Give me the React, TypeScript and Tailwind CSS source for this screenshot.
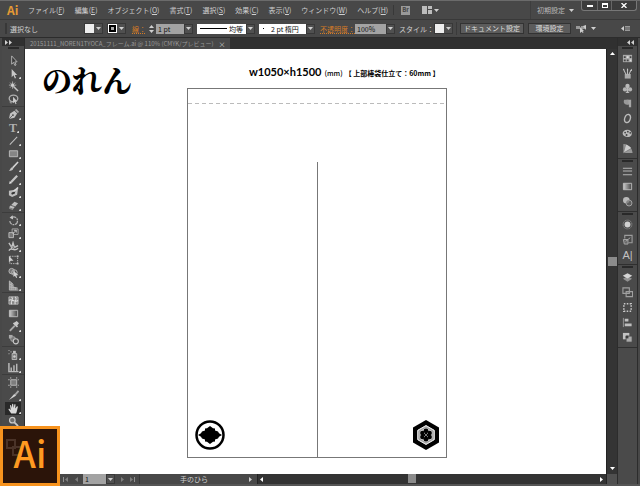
import React from "react";

type IconName = string;

const icons: Record<IconName, React.ReactNode> = {
  select: <path d="M4 1v9l2-2 1.5 3.5 1.3-.6L7.4 7.500H10z" fill="#3a3a3a" stroke="#b8b8b8" strokeWidth="1" />,
  direct: <path d="M4 1v9l2-2 1.500 3.500 1.300-.6L7.400 7.500H10z" fill="#c8c8c8" />,
  wand: (
    <>
      <path d="M6 6l5 5" stroke="#c4c4c4" strokeWidth="1.600" />
      <path d="M5 .5v8M1 4.500h8M2.300 1.800l5.400 5.400M7.700 1.800L2.300 7.200" stroke="#b8b8b8" strokeWidth=".9" />
      <circle cx="5" cy="4.500" r="1.700" fill="#ccc" />
    </>
  ),
  lasso: (
    <>
      <ellipse cx="6" cy="4.800" rx="4.700" ry="3.500" fill="none" stroke="#b0b0b0" strokeWidth="1.400" />
      <path d="M3 7.500c-2 1 0 3 1 2.200s0-2-1-1.700" fill="none" stroke="#b0b0b0" />
      <path d="M5.500 3v7l1.600-1.500 1.200 2.600 1-.5-1.100-2.500h2z" fill="#ccc" />
    </>
  ),
  pen: (
    <>
      <path d="M1 11l1.300-6L7 2l3 3-3 4.600z" fill="#c2c2c2" />
      <path d="M7.500 1.200L9 0l3 3-1.200 1.500z" fill="#a8a8a8" />
      <path d="M1 11l4-4" stroke="#444" strokeWidth=".8" />
      <circle cx="5.400" cy="6.600" r="1" fill="#444" />
    </>
  ),
  line: <path d="M2 10.500L10 2" stroke="#c0c0c0" strokeWidth="1.100" />,
  rect: <path d="M1.500 3h9v6.500h-9z" fill="#858585" stroke="#bcbcbc" />,
  brush: (
    <>
      <path d="M5 7.500L11 1" stroke="#d4d4d4" strokeWidth="1.700" />
      <path d="M5.800 7.800C5 11 2.500 10.500.8 10.700c1.800-.9 1.500-3 3.500-3.900z" fill="#c4c4c4" />
    </>
  ),
  pencil: (
    <>
      <path d="M3.500 8.800L10 2" stroke="#c5c5c5" strokeWidth="2.400" />
      <path d="M1.200 11l.8-3.500 2.600 2.300z" fill="#e0e0e0" />
    </>
  ),
  blob: (
    <>
      <path d="M1 4l5-.8 5-2.200-1 7.500L4.500 11 1 9z" fill="#bdbdbd" />
      <path d="M3.500 6.500L8 3.700l-.5 3.500-3.200 1.300z" fill="#333" />
      <path d="M6 5l5-4.500" stroke="#d8d8d8" strokeWidth="1.600" />
    </>
  ),
  eraser: (
    <>
      <path d="M1 8l6-6 4 1.500-5.500 6.200z" fill="#bebebe" />
      <path d="M1 8l4.500 1.700v1.500L1.200 9.500z" fill="#888" />
      <path d="M3.200 5.800l4.500 1.600" stroke="#5b5b5b" />
    </>
  ),
  rotate: (
    <>
      <path d="M4 2.800A4.200 4.200 0 1 1 2 6.500" fill="none" stroke="#b4b4b4" strokeWidth="1.300" strokeDasharray="5 .8 2 .8" />
      <path d="M5 .4L1.800 3 5.600 4.800z" fill="#c7c7c7" />
    </>
  ),
  scale: (
    <>
      <path d="M4.500 1h6.500v6H4.500z" fill="none" stroke="#aaa" />
      <path d="M1 5h5v5.500H1z" fill="#777" stroke="#bbb" />
      <path d="M5 6.500l4-4M6.500 2.500H9V5" fill="none" stroke="#ccc" />
    </>
  ),
  width: (
    <>
      <path d="M1 2l3 5 1.500-5L7 7l4-2M1 10.500c3-5 5 2 10-2.500" fill="none" stroke="#c2c2c2" strokeWidth="1.500" />
      <path d="M3 4.500l3 4 2-3" fill="none" stroke="#aaa" />
    </>
  ),
  free: (
    <>
      <path d="M2 2.500h8.500v8H2z" fill="none" stroke="#bdbdbd" strokeDasharray="1.500 1" />
      <path d="M1 2v7l2-1.600h3z" fill="#cecece" />
      <path d="M9.500 1.500h2v2h-2zM9.500 9.500h2v2h-2z" fill="#bdbdbd" />
    </>
  ),
  shape: (
    <>
      <circle cx="4" cy="4.500" r="3" fill="#777" stroke="#b6b6b6" />
      <circle cx="7" cy="6" r="3" fill="none" stroke="#b6b6b6" />
      <path d="M6 4v7l1.500-1.500L9 12l1-.5L9 9h2.500z" fill="#d0d0d0" />
    </>
  ),
  perspective: (
    <>
      <path d="M1.500 1L5 4v7H1.500zM5 6.500l5.500 2.200V11H5z" fill="#8c8c8c" />
      <path d="M1.500 1v10h10M1.500 1l4 3.500V11M3.500 3v8M8 8v3M1.500 4.500l4 1.500M1.500 7.500l9 1.300" fill="none" stroke="#b9b9b9" />
    </>
  ),
  mesh: (
    <>
      <path d="M1 2h10v8H1z" fill="#858585" stroke="#b5b5b5" />
      <path d="M1 6c3-3 6 3 10 0M4 2c3 3-2 5 0 8M8 2c3 3-2 5 0 8" fill="none" stroke="#e0e0e0" strokeWidth="1.100" />
    </>
  ),
  gradient: <path d="M1.500 2.500h9v7h-9z" fill="url(#grey-ramp)" stroke="#bcbcbc" />,
  dropper: (
    <>
      <path d="M7 1.500L9.500 0 12 2.500 10 5l1 .8-1.200 1.200L5.300 2.600 6.500 1.500z" fill="#c9c9c9" />
      <path d="M7.500 5L2 10.700" stroke="#aaa" strokeWidth="2" />
    </>
  ),
  blend: (
    <>
      <path d="M1 1h4v4H1z" fill="#aaa" />
      <rect x="3" y="3" width="5" height="5" rx="2" fill="#777" stroke="#aaa" />
      <circle cx="8.500" cy="8" r="2.800" fill="#4c4c4c" stroke="#c7c7c7" strokeWidth="1.200" />
    </>
  ),
  spray: (
    <>
      <path d="M4.500 5h5v6.500h-5z" fill="#777" stroke="#bdbdbd" />
      <path d="M5.500 2h3v2.500h-3z" fill="#c2c2c2" />
      <circle cx="7" cy="8.200" r="1.400" fill="#ccc" />
      <path d="M.5 1h1.200v1.200H.5zM2.700 2.500h1.200v1.200H2.700zM.5 4.500h1.200v1.200H.5z" fill="#aaa" />
    </>
  ),
  graph: <path d="M1 1v9.500h10.500M3.500 10V6M6.500 10V3.500M9.500 10V2" fill="none" stroke="#b8b8b8" strokeWidth="1.600" />,
  artboard: (
    <>
      <path d="M3 3h6.500v6H3z" fill="#7d7d7d" stroke="#bcbcbc" />
      <path d="M3 0v2M9.500 0v2M3 10v2M9.500 10v2M0 3h2M0 9h2M10.500 3h1.500M10.500 9h1.500" stroke="#aaa" />
    </>
  ),
  slice: (
    <>
      <path d="M1 11L7 4l2 2z" fill="#d3d3d3" />
      <path d="M7.500 5.500L11.500 1" stroke="#a5a5a5" strokeWidth="2" />
    </>
  ),
  hand: (
    <path
      d="M3.500 11.500L.7 7.400c-.5-1 .6-1.500 1.300-.7l1 1L2.200 3c-.1-1 1-1.200 1.300-.2l.8 2.700.1-4c.1-1 1.300-1 1.400 0l.3 4 .8-3.700c.3-1 1.400-.7 1.300.3l-.4 4L9.400 4c.5-.9 1.500-.4 1.300.5L9.500 9.600l-.7 1.900z"
      fill="#d9d9d9"
    />
  ),
  zoom: (
    <>
      <circle cx="4.700" cy="4.500" r="3" fill="#707070" stroke="#cacaca" strokeWidth="1.300" />
      <path d="M7 7l4 4" stroke="#c9c9c9" strokeWidth="1.900" />
    </>
  ),
  swatches: (
    <>
      <path d="M1 2h10v8H1z" fill="#aaa" />
      <path d="M2 3.500h2v2H2zM8.500 3.500h1.700v2H8.500zM2 7h2v2H2zM5.200 7h2v2h-2z" fill="#444" />
      <path d="M5.200 3.500h2v2h-2zM8.500 7h1.700v2H8.500z" fill="#ddd" />
    </>
  ),
  brushes: (
    <>
      <path d="M3 6.500h6.500v5H3z" fill="#aaa" />
      <path d="M4.500 7L2 2.500M6 7V2M7.500 7l2-4" stroke="#bdbdbd" strokeWidth="1.100" />
      <path d="M1 2.500L1.600.5l1.600 2zM5.200 2.500L6 0l1 2.500zM8.500 3L10.700.7l.2 2.600z" fill="#d0d0d0" />
    </>
  ),
  club: (
    <>
      <circle cx="6" cy="3.300" r="2.400" fill="#bababa" />
      <circle cx="3.200" cy="7" r="2.300" fill="#b3b3b3" />
      <circle cx="8.800" cy="7" r="2.300" fill="#b3b3b3" />
      <path d="M5.300 4h1.400l.2 5.500 1.500 1.500H3.600l1.500-1.500z" fill="#bababa" />
    </>
  ),
  paragraph: (
    <>
      <path d="M5 2h5v8H7.500V7H5z" fill="#a6a6a6" />
      <path d="M2.500 2H7v5H4.500c-3 0-3-4-2-5z" fill="#999" />
    </>
  ),
  opentype: (
    <ellipse cx="6" cy="6" rx="3" ry="4.600" transform="rotate(18 6 6)" fill="none" stroke="#bcbcbc" strokeWidth="1.500" />
  ),
  palette: (
    <>
      <path d="M6 2C2.500 2 .5 4 .7 6.300.9 9 5 10.500 8.500 9.500 12 8.500 11.500 2 6 2z" fill="#bababa" />
      <circle cx="3.400" cy="5" r="1" fill="#444" />
      <circle cx="6.400" cy="4" r="1" fill="#444" />
      <circle cx="9" cy="5.300" r="1" fill="#444" />
      <circle cx="5" cy="7.600" r="1.100" fill="#444" />
    </>
  ),
  guide: (
    <>
      <path d="M1.500 1v10h10C11 5 7 1.500 1.500 1z" fill="#999" />
      <path d="M1.500 11L4 1.500C7 2.500 9 4 10 6z" fill="#ccc" />
      <path d="M1.500 11L10 6M1.500 11L4 1.500" stroke="#6c6c6c" strokeWidth=".7" />
    </>
  ),
  stroke: <path d="M1 2.500h10M1 5.500h10M1 9.500h10" stroke="#b5b5b5" strokeWidth="1.200" />,
  transparency: (
    <>
      <circle cx="4.700" cy="4.700" r="3.600" fill="#b9b9b9" />
      <circle cx="7.700" cy="7.700" r="3.200" fill="#5c5c5c" stroke="#a9a9a9" />
      <path d="M7.700 4.500a3.200 3.200 0 0 0-3 3.500C7 8 8.300 6.500 8 4.500z" fill="#858585" />
    </>
  ),
  appearance: (
    <>
      <circle cx="6" cy="6" r="3.200" fill="#d0d0d0" />
      <circle cx="6" cy="6" r="4.800" fill="none" stroke="#999" strokeDasharray="1.200 .9" />
    </>
  ),
  styles: (
    <>
      <path d="M3 5V1.500h8v8H7" fill="none" stroke="#9d9d9d" strokeWidth="1.200" />
      <path d="M1.500 6h5v5h-4z" fill="#686868" stroke="#aaa" />
      <path d="M4 8l5-4" stroke="#aaa" />
    </>
  ),
  layers: (
    <>
      <path d="M6 4.700l5 2.600L6 10.500 1 7.300z" fill="#929292" />
      <path d="M6 1.300L11.200 4 6 7.200.8 4z" fill="#d4d4d4" />
    </>
  ),
  artboards: (
    <path d="M1 1h7v6H1zM4.500 5h7v5.500h-7z" fill="#4b4b4b" stroke="#a0a0a0" strokeWidth="1.200" />
  ),
  transform: (
    <path d="M2 2h8v8H2z" fill="none" stroke="#c8c8c8" strokeWidth="1.700" strokeDasharray="1.700 1.500" />
  ),
  align: (
    <>
      <path d="M1.500 1v10" stroke="#999" />
      <path d="M3 2h4v3H3zM3 7h7.500v3H3z" fill="#bebebe" />
    </>
  ),
  pathfinder: (
    <>
      <path d="M1 1h7v7H1z" fill="#c2c2c2" />
      <path d="M4.500 4.500h6.500V11H4.500z" fill="#aaa" stroke="#484848" strokeWidth=".8" />
      <path d="M4 4h3v3H4z" fill="#3c3c3c" />
    </>
  ),
};

function Icon({ name }: { name: IconName }) {
  if (name === "type") return <span className="font-['Liberation_Serif',serif] text-[12px] leading-[12px] font-bold text-[#b0b0b0]">T</span>;
  if (name === "character") return <span className="font-['Liberation_Sans',sans-serif] text-[11px] leading-[12px] text-[#c2c2c2]">A|</span>;
  return (
    <svg viewBox="0 0 12 12" className="size-[11px]" aria-hidden="true">
      {icons[name]}
    </svg>
  );
}

function Arrow({ dir = "down", className = "" }: { dir?: "down" | "left" | "right" | "up"; className?: string }) {
  const d = { down: "M0 1h5L2.500 4z", up: "M0 4h5L2.500 1z", left: "M4 0v5L1 2.500z", right: "M1 0v5l3-2.500z" }[dir];
  return (
    <svg viewBox="0 0 5 5" className={`size-[5px] shrink-0 fill-[#d0d0d0] ${className}`} aria-hidden="true">
      <path d={d} />
    </svg>
  );
}

const toolGroups: [IconName, string][][] = [
  [["select", "選択"], ["direct", "ダイレクト選択"], ["wand", "自動選択"], ["lasso", "なげなわ"]],
  [["pen", "ペン"], ["type", "文字"], ["line", "直線"], ["rect", "長方形"], ["brush", "ブラシ"], ["pencil", "鉛筆"], ["blob", "塗りブラシ"], ["eraser", "消しゴム"]],
  [["rotate", "回転"], ["scale", "拡大・縮小"], ["width", "線幅"], ["free", "自由変形"], ["shape", "シェイプ形成"], ["perspective", "遠近グリッド"]],
  [["mesh", "メッシュ"], ["gradient", "グラデーション"], ["dropper", "スポイト"], ["blend", "ブレンド"]],
  [["spray", "シンボルスプレー"], ["graph", "棒グラフ"]],
  [["artboard", "アートボード"], ["slice", "スライス"], ["hand", "手のひら"], ["zoom", "ズーム"]],
];
const plainTools = ["select", "wand", "lasso", "free", "mesh", "gradient", "blend", "artboard", "zoom"];

const panelGroups: [IconName, string][][] = [
  [["swatches", "スウォッチ"], ["brushes", "ブラシ"], ["club", "シンボル"], ["paragraph", "段落"], ["opentype", "OpenType"], ["palette", "カラー"], ["guide", "カラーガイド"]],
  [["stroke", "線"], ["gradient", "グラデーション"], ["transparency", "透明"]],
  [["appearance", "アピアランス"], ["styles", "グラフィックスタイル"], ["character", "文字"]],
  [["layers", "レイヤー"], ["artboards", "アートボード"], ["transform", "変形"], ["align", "整列"], ["pathfinder", "パスファインダー"]],
];

const menus = [["ファイル", "F"], ["編集", "E"], ["オブジェクト", "O"], ["書式", "T"], ["選択", "S"], ["効果", "C"], ["表示", "V"], ["ウィンドウ", "W"], ["ヘルプ", "H"]];

function Dropdown({ label, value, className, children }: { label: string; value: string; className: string; children?: React.ReactNode }) {
  return (
    <span className="relative flex h-[10px] shrink-0">
      <select aria-label={label} className={`h-[10px] appearance-none rounded-none text-[7px] leading-[10px] text-[#111] ${className}`}>
        <option>{value}</option>
      </select>
      {children}
      <span className="pointer-events-none flex w-[9px] items-center justify-center border border-[#383838] bg-[#505050]">
        <Arrow />
      </span>
    </span>
  );
}

function Swatch({ label, stroke = false }: { label: string; stroke?: boolean }) {
  return (
    <button aria-label={label} className="flex h-[11px] shrink-0 items-center border border-[#383838] bg-[#505050]">
      <span className={stroke ? "size-[9px] border border-white bg-black p-[2px]" : "size-[9px] bg-[#eee]"}>
        {stroke && <span className="block size-[3px] bg-[#aaa]" />}
      </span>
      <span className="flex w-[8px] justify-center"><Arrow /></span>
    </button>
  );
}

function MenuBar() {
  return (
    <header className="flex h-[19px] border-t border-[#6b6b6b] pl-[7px] text-[#cfcfcf]">
      <span className="w-[21px] shrink-0 text-[12px] leading-[17px] font-bold text-[#e39a35]">Ai</span>
      <nav className="flex items-center gap-[10px]">
        {menus.map(([name, key]) => (
          <button key={key} className="shrink-0 whitespace-nowrap">
            {name}(<u>{key}</u>)
          </button>
        ))}
      </nav>
      <span className="mx-[5px] my-[4px] w-px bg-[#383838]" />
      <span className="flex items-center gap-[12px] pl-[2px]">
        <button className="flex h-[9px] w-[9px] items-center justify-center bg-[#999] text-[6px] font-bold text-[#444]">Br</button>
        <button aria-label="ドキュメントレイアウト" className="flex items-center gap-[2px]">
          <svg viewBox="0 0 10 8" className="h-[8px] w-[10px]"><path d="M0 0h5v8H0zM6 0h4v3H6zM6 4h4v4H6z" fill="#bcbcbc" /></svg>
          <Arrow />
        </button>
      </span>
      <span className="ml-auto flex items-center gap-[4px] border-l border-[#3e3e3e] pl-[6px] text-[#b8b8b8]">
        <button className="shrink-0">初期設定</button>
        <Arrow className="size-[4px]" />
      </span>
      <span className="mr-[3px] ml-[7px] flex h-[10px] rounded-b-[3px] border border-t-0 border-[#777] bg-[#3c3c3c]">
        <button aria-label="最小化" className="flex w-[15px] items-center justify-center"><span className="h-[2px] w-[6px] bg-white" /></button>
        <button aria-label="最大化" className="flex w-[15px] items-center justify-center border-x border-[#666]"><span className="h-[5px] w-[6px] border border-t-2 border-white" /></button>
        <button aria-label="閉じる" className="flex w-[24px] items-center justify-center">
          <svg viewBox="0 0 6 5" className="h-[5px] w-[6px]"><path d="M.5 0l5 5M5.500 0l-5 5" stroke="#fff" strokeWidth="1.300" /></svg>
        </button>
      </span>
    </header>
  );
}

function ControlBar() {
  return (
    <section className="flex h-[19px] items-center border-y border-t-[#393939] border-b-[#2c2c2c] pl-[5px]">
      <span className="h-[11px] w-[2px] shrink-0 bg-[#383838]" />
      <span className="ml-[3px] w-[74px] shrink-0">選択なし</span>
      <Swatch label="塗り" />
      <span className="w-[4px] shrink-0" />
      <Swatch label="線" stroke />
      <button className="ml-[6px] w-[17px] shrink-0 text-left text-[#d57c26] underline decoration-dotted">線：</button>
      <button aria-label="線幅を増減" className="mr-[2px] flex h-[10px] flex-col justify-between"><Arrow dir="up" /><Arrow /></button>
      <Dropdown label="線幅" value="1 pt" className="w-[28px] bg-[#a3a3a3] pl-[2px]" />
      <span className="w-[4px] shrink-0" />
      <Dropdown label="線幅プロファイル" value="均等" className="w-[49px] bg-white pl-[32px]">
        <span className="pointer-events-none absolute top-[4px] left-[3px] h-px w-[27px] bg-black" />
      </Dropdown>
      <span className="w-[4px] shrink-0" />
      <Dropdown label="ブラシ" value="2 pt 楕円" className="w-[47px] bg-white pl-[12px]">
        <span className="pointer-events-none absolute top-[4px] left-[4px] size-px bg-black" />
      </Dropdown>
      <button className="ml-[5px] w-[35px] shrink-0 text-left whitespace-nowrap text-[#d57c26] underline decoration-dotted">不透明度：</button>
      <Dropdown label="不透明度" value="100%" className="w-[31px] bg-[#a3a3a3] pl-[2px]" />
      <span className="ml-[4px] w-[35px] shrink-0 whitespace-nowrap">スタイル：</span>
      <Swatch label="スタイル" />
      <span className="mx-[3px] h-[13px] w-px shrink-0 bg-[#3a3a3a]" />
      <button className="h-[11px] w-[64px] shrink-0 border border-[#333] bg-[#5c5c5c] leading-[9px] text-[#dedede]">ドキュメント設定</button>
      <button className="ml-[4px] h-[11px] w-[43px] shrink-0 border border-[#333] bg-[#5c5c5c] leading-[9px] text-[#dedede]">環境設定</button>
      <button aria-label="類似オブジェクトを選択" className="ml-[5px] flex shrink-0 items-center gap-[5px]">
        <svg viewBox="0 0 10 8" className="h-[8px] w-[10px]"><path d="M0 1h4v3H0zM5 1h4v3H5z" fill="#999" /><path d="M4 2v6l1.500-1.300L7 8l.5-1-1-1H8zM7 1l3-1v5z" fill="#ccc" /></svg>
        <Arrow />
      </button>
      <button aria-label="パネルメニュー" className="mr-[10px] ml-auto flex items-center">
        <Arrow dir="left" className="size-[4px]" />
        <span className="h-[5px] w-[5px] border-y border-[#999] bg-[#777]" />
      </button>
    </section>
  );
}

function Toolbar() {
  return (
    <aside className="flex w-[23px] shrink-0 flex-col border-r border-[#2c2c2c] bg-[#4a4a4a]">
      <div className="flex h-[8px] items-center bg-[#303030] pl-[2px]"><Arrow dir="right" className="size-[4px]" /><Arrow dir="right" className="-ml-px size-[4px]" /></div>
      <div className="mx-auto mt-px mb-[5px] h-[2px] w-[11px] bg-[#292929]" />
      {toolGroups.map((group, g) => (
        <div key={g} className={g === 0 ? "" : "border-t border-[#3c3c3c] pt-px"}>
          {group.map(([name, label]) => (
            <button
              key={name}
              aria-label={label}
              className={`mx-auto flex h-[13px] w-[16px] items-center justify-center ${name === "hand" ? "bg-[#292929]" : ""}`}
            >
              <Icon name={name} />
              {!plainTools.includes(name) && <span className="-mr-[2px] mb-px size-[2px] self-end rounded-tl-full bg-[#ddd]" />}
            </button>
          ))}
        </div>
      ))}
    </aside>
  );
}

function PanelDock() {
  return (
    <aside className="w-[21px] shrink-0 border-x border-[#2c2c2c] bg-[#4a4a4a]">
      <div className="flex h-[8px] items-center justify-end bg-[#303030] pr-[2px]"><Arrow dir="left" className="size-[4px]" /><Arrow dir="left" className="-ml-px size-[4px]" /></div>
      {panelGroups.map((group, g) => (
        <div key={g} className="border-b border-[#2f2f2f] pt-px pb-[2px]">
          <div className="mx-auto mb-[2px] h-[2px] w-[11px] bg-[#292929]" />
          {group.map(([name, label]) => (
            <button key={name} aria-label={label} className="flex h-[15px] w-full items-center justify-center">
              <Icon name={name} />
            </button>
          ))}
        </div>
      ))}
    </aside>
  );
}

function DiamondCrest() {
  return (
    <svg viewBox="0 0 30 30" className="absolute bottom-[7px] left-[7px] size-[30px]" role="img" aria-label="松皮菱">
      <circle cx="15" cy="15" r="13.500" fill="white" stroke="#000" strokeWidth="2.500" />
      <path d="M15 6l3 2.300 2 .3v2l3 1 1 1.700L27 15l-3 1.700-1 1.700-3 1v2l-2 .3L15 24l-3-2.300-2-.3v-2l-3-1-1-1.700L3 15l3-1.700 1-1.700 3-1v-2l2-.3z" />
    </svg>
  );
}

function HexCrest() {
  return (
    <svg viewBox="0 0 28 30" className="absolute right-[6px] bottom-[7px] h-[30px] w-[28px]" role="img" aria-label="亀甲花菱">
      <path d="M14 0l13 7.500v15L14 30 1 22.500v-15z" />
      <path d="M14 5.500l8.300 4.800v9.400L14 24.500l-8.300-4.800v-9.400z" fill="#ccc" stroke="#eee" />
      <path d="M14 7l7 4v8l-7 4-7-4v-8z" fill="none" stroke="#777" strokeWidth=".6" />
      <circle cx="14" cy="10.800" r="2.400" />
      <circle cx="14" cy="19.200" r="2.400" />
      <circle cx="10.400" cy="13" r="2.300" />
      <circle cx="17.600" cy="13" r="2.300" />
      <circle cx="10.400" cy="17" r="2.300" />
      <circle cx="17.600" cy="17" r="2.300" />
      <circle cx="14" cy="15" r="2.500" />
      <path d="M12 13l4 4M16 13l-4 4" stroke="#777" />
    </svg>
  );
}

function Canvas() {
  return (
    <main className="relative min-h-[425px] grow overflow-hidden bg-white text-black">
      <h1 className="absolute top-[9px] left-[17px] font-['Noto_Serif_CJK_JP','Noto_Sans_CJK_JP',serif] text-[30px] leading-[42px] font-black whitespace-nowrap">のれん</h1>
      <p className="absolute top-[15px] left-[224px] flex items-baseline text-[7px] leading-[16px] font-bold whitespace-nowrap">
        <span className="font-['Lato','Noto_Sans_CJK_JP',sans-serif] text-[11px]">w1050×h1500</span>
        <span className="ml-[3px] font-medium">(mm)</span>
        <span className="ml-[2px]">【 上部棒袋仕立て：60mm 】</span>
      </p>
      <div className="absolute top-[39px] left-[162px] h-[370px] w-[260px] border border-[#777]">
        <svg className="block h-[15px] w-full" aria-hidden="true">
          <path d="M0 14.500h258" stroke="#bbb" strokeDasharray="4 3" />
        </svg>
        <div className="absolute top-[73px] bottom-0 left-[129px] w-px bg-[#777]" />
        <DiamondCrest />
        <HexCrest />
      </div>
    </main>
  );
}

function StatusBar() {
  return (
    <footer className="flex h-[10px] items-center bg-[#333] text-[#cfcfcf]">
      <div className="flex h-full w-[233px] shrink-0 items-center border-r border-[#222] bg-[#484848] pl-[38px]">
        <button aria-label="最初" className="flex opacity-40"><span className="h-[5px] w-px bg-white" /><Arrow dir="left" /></button>
        <button aria-label="前へ" className="mr-[4px] ml-[5px] opacity-40"><Arrow dir="left" /></button>
        <Dropdown label="アートボード番号" value="1" className="w-[23px] bg-[#a3a3a3] pl-[2px]" />
        <button aria-label="次へ" className="ml-[5px] opacity-40"><Arrow dir="right" /></button>
        <button aria-label="最後" className="ml-[4px] flex opacity-40"><Arrow dir="right" /><span className="h-[5px] w-px bg-white" /></button>
        <span className="ml-[4px] h-full w-px bg-[#383838]" />
        <span className="grow text-center leading-[10px]">手のひら</span>
        <Arrow dir="right" className="mr-[4px]" />
      </div>
      <button aria-label="左へスクロール" className="ml-px"><Arrow dir="left" className="fill-white" /></button>
      <div className="flex h-full grow"><span className="h-full w-[43%]" /><span className="h-[9px] w-[8px] bg-[#8b8b8b]" /></div>
      <button aria-label="右へスクロール" className="mr-[2px]"><Arrow dir="right" className="fill-white" /></button>
    </footer>
  );
}

export default function App() {
  return (
    <div className="relative flex min-h-screen flex-col overflow-hidden bg-[#484848] font-['Noto_Sans_CJK_JP','Noto_Sans',sans-serif] text-[7px] leading-[10px] text-[#cfcfcf]">
      <svg className="absolute size-0" aria-hidden="true">
        <defs>
          <linearGradient id="grey-ramp"><stop stopColor="#ccc" /><stop offset="1" stopColor="#444" /></linearGradient>
        </defs>
      </svg>
      <MenuBar />
      <ControlBar />
      <div className="flex grow px-[2px]">
        <Toolbar />
        <div className="flex min-w-0 grow flex-col">
          <div className="flex h-[11px] bg-[#303030]">
            <div className="flex items-center gap-[5px] bg-[#484848] pl-[5px] text-[#999]">
              <span className="text-[6px] whitespace-nowrap">20151111_NOREN1TYOCA_フレーム.ai @ 110% (CMYK/プレビュー)</span>
              <button aria-label="タブを閉じる" className="pr-[4px] text-[#ccc]">×</button>
            </div>
          </div>
          <div className="flex grow">
            <div className="flex min-w-0 grow flex-col">
              <Canvas />
              <StatusBar />
            </div>
            <div className="flex w-[11px] shrink-0 flex-col items-center border-l border-[#222] bg-[#343434]">
              <button aria-label="上へスクロール" className="mt-[2px]"><Arrow dir="up" className="fill-white" /></button>
              <div className="flex grow flex-col items-center"><span className="h-[49%]" /><span className="h-[9px] w-[9px] bg-[#8b8b8b]" /></div>
              <button aria-label="下へスクロール" className="mb-[3px]"><Arrow className="fill-white" /></button>
              <span className="h-[10px] w-full bg-[#505050]" />
            </div>
          </div>
        </div>
        <PanelDock />
      </div>
      <div className="h-[2px] bg-[#555]" />
      <div className="absolute bottom-0 left-0 flex size-[60px] items-center justify-center border-[3px] border-[#f7931e] bg-[#2b1409] pb-[8px] text-[36px] leading-[46px] font-medium text-[#ff9a21]">
        <span className="absolute top-[10px] left-[3px] size-[10px] border-2 border-[#4a3328]" />
        <span className="absolute top-[17px] left-[9px] size-[10px] border-2 border-[#4a3328]" />
        <span className="relative">Ai</span>
      </div>
    </div>
  );
}
